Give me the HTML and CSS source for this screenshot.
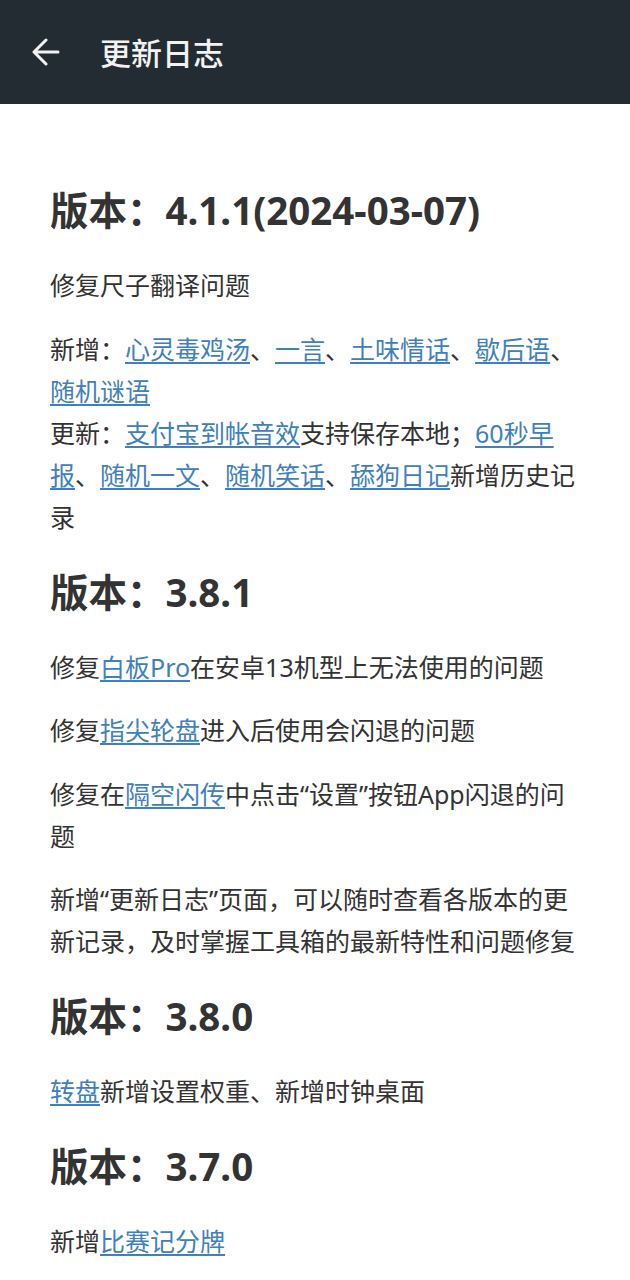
FILE: index.html
```html
<!DOCTYPE html>
<html lang="zh-CN">
<head>
<meta charset="utf-8">
<title>更新日志</title>
<link rel="stylesheet" href="styles.css">
</head>
<body>
<header class="appbar">
  <span class="back">
    <svg width="28" height="28" viewBox="0 0 28 28" fill="none" stroke="#f2f2f2" stroke-width="3" stroke-linecap="round" stroke-linejoin="round"><path d="M26 14H3M14 2L2 14l12 12"/></svg>
  </span>
  <span class="title">更新日志</span>
</header>
<main class="content">
  <h2 class="ver">版本：4.1.1(2024-03-07)</h2>
  <p>修复尺子翻译问题</p>
  <p>新增：<a href="#">心灵毒鸡汤</a>、<a href="#">一言</a>、<a href="#">土味情话</a>、<a href="#">歇后语</a>、<a href="#">随机谜语</a><br>更新：<a href="#">支付宝到帐音效</a>支持保存本地；<a href="#">60秒早报</a>、<a href="#">随机一文</a>、<a href="#">随机笑话</a>、<a href="#">舔狗日记</a>新增历史记录</p>
  <h2 class="ver">版本：3.8.1</h2>
  <p>修复<a href="#">白板Pro</a>在安卓13机型上无法使用的问题</p>
  <p>修复<a href="#">指尖轮盘</a>进入后使用会闪退的问题</p>
  <p>修复在<a href="#">隔空闪传</a>中点击“设置”按钮App闪退的问题</p>
  <p>新增“更新日志”页面，可以随时查看各版本的更新记录，及时掌握工具箱的最新特性和问题修复</p>
  <h2 class="ver">版本：3.8.0</h2>
  <p><a href="#">转盘</a>新增设置权重、新增时钟桌面</p>
  <h2 class="ver">版本：3.7.0</h2>
  <p>新增<a href="#">比赛记分牌</a></p>
</main>
</body>
</html>
```
FILE: styles.css
```css
html, body {
  margin: 0;
  padding: 0;
  background: #ffffff;
}
body {
  font-family: "Noto Sans", "Noto Sans CJK SC", sans-serif;
  color: #333333;
}
.appbar {
  height: 104px;
  background: #232c33;
  display: flex;
  align-items: center;
  padding: 0 0 0 32px;
  box-sizing: border-box;
}
.back {
  display: flex;
  width: 28px;
  height: 28px;
  margin-right: 40px;
}
.title {
  color: #f2f2f2;
  font-size: 31px;
  font-weight: 500;
  line-height: 1;
  margin-top: 2px;
}
.content {
  padding: 52px 50px 20px 50px;
}
.ver {
  font-size: 38.5px;
  font-weight: 700;
  line-height: 56px;
  margin: 26px 0;
  color: #333333;
}
p {
  font-size: 25px;
  line-height: 42px;
  margin: 21.5px 0;
  color: #333333;
}
a {
  color: #3f80c0;
  text-decoration: underline;
  text-decoration-thickness: 2px;
  text-underline-offset: 3px;
}
```
